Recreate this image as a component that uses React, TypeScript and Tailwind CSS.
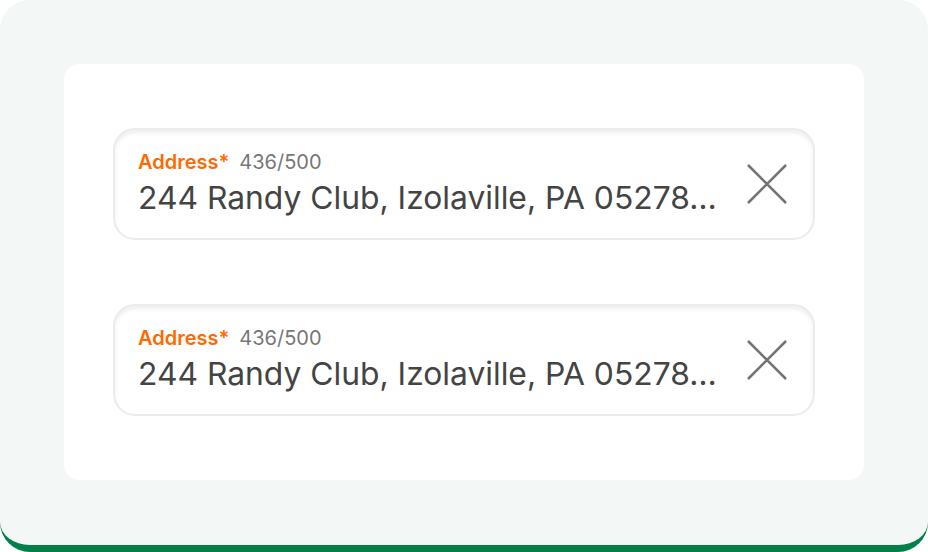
const font = { fontFamily: 'Inter, "Noto Sans", sans-serif' }

function CloseIcon() {
  return (
    <svg width="40" height="40" viewBox="0 0 40 40" fill="none" stroke="currentColor" strokeWidth="2.6">
      <path d="M1 1L39 39M39 1L1 39" />
    </svg>
  )
}

function AddressField() {
  return (
    <div className="flex h-[112px] items-center gap-[28px] rounded-[22px] border-2 border-[#ebebeb] bg-white pb-[2px] pl-[23px] pr-[26px] shadow-[inset_0_3px_4px_rgba(0,0,0,0.07)]">
      <div className="min-w-0 flex-1">
        <div className="flex items-baseline gap-[10px] text-[20px] leading-[26px]">
          <span className="font-semibold text-[#ff6a00]">Address*</span>
          <span className="text-[#777777]">436/500</span>
        </div>
        <div className="mt-[4px] whitespace-nowrap text-[31.8px] leading-[38px] text-[#444444]">
          244 Randy Club, Izolaville, PA 05278…
        </div>
      </div>
      <button type="button" className="mt-[2px] flex h-[40px] w-[40px] items-center justify-center text-[#737373]">
        <CloseIcon />
      </button>
    </div>
  )
}

export default function App() {
  return (
    <div className="h-[552px] w-[928px] bg-white" style={font}>
      <div className="h-[552px] w-[928px] rounded-[30px] border-b-[7px] border-[#03804a] bg-[#f3f7f6] p-16">
        <div className="flex h-[416px] w-[800px] flex-col gap-16 rounded-[16px] bg-white px-[49px] pt-16">
          <AddressField />
          <AddressField />
        </div>
      </div>
    </div>
  )
}
